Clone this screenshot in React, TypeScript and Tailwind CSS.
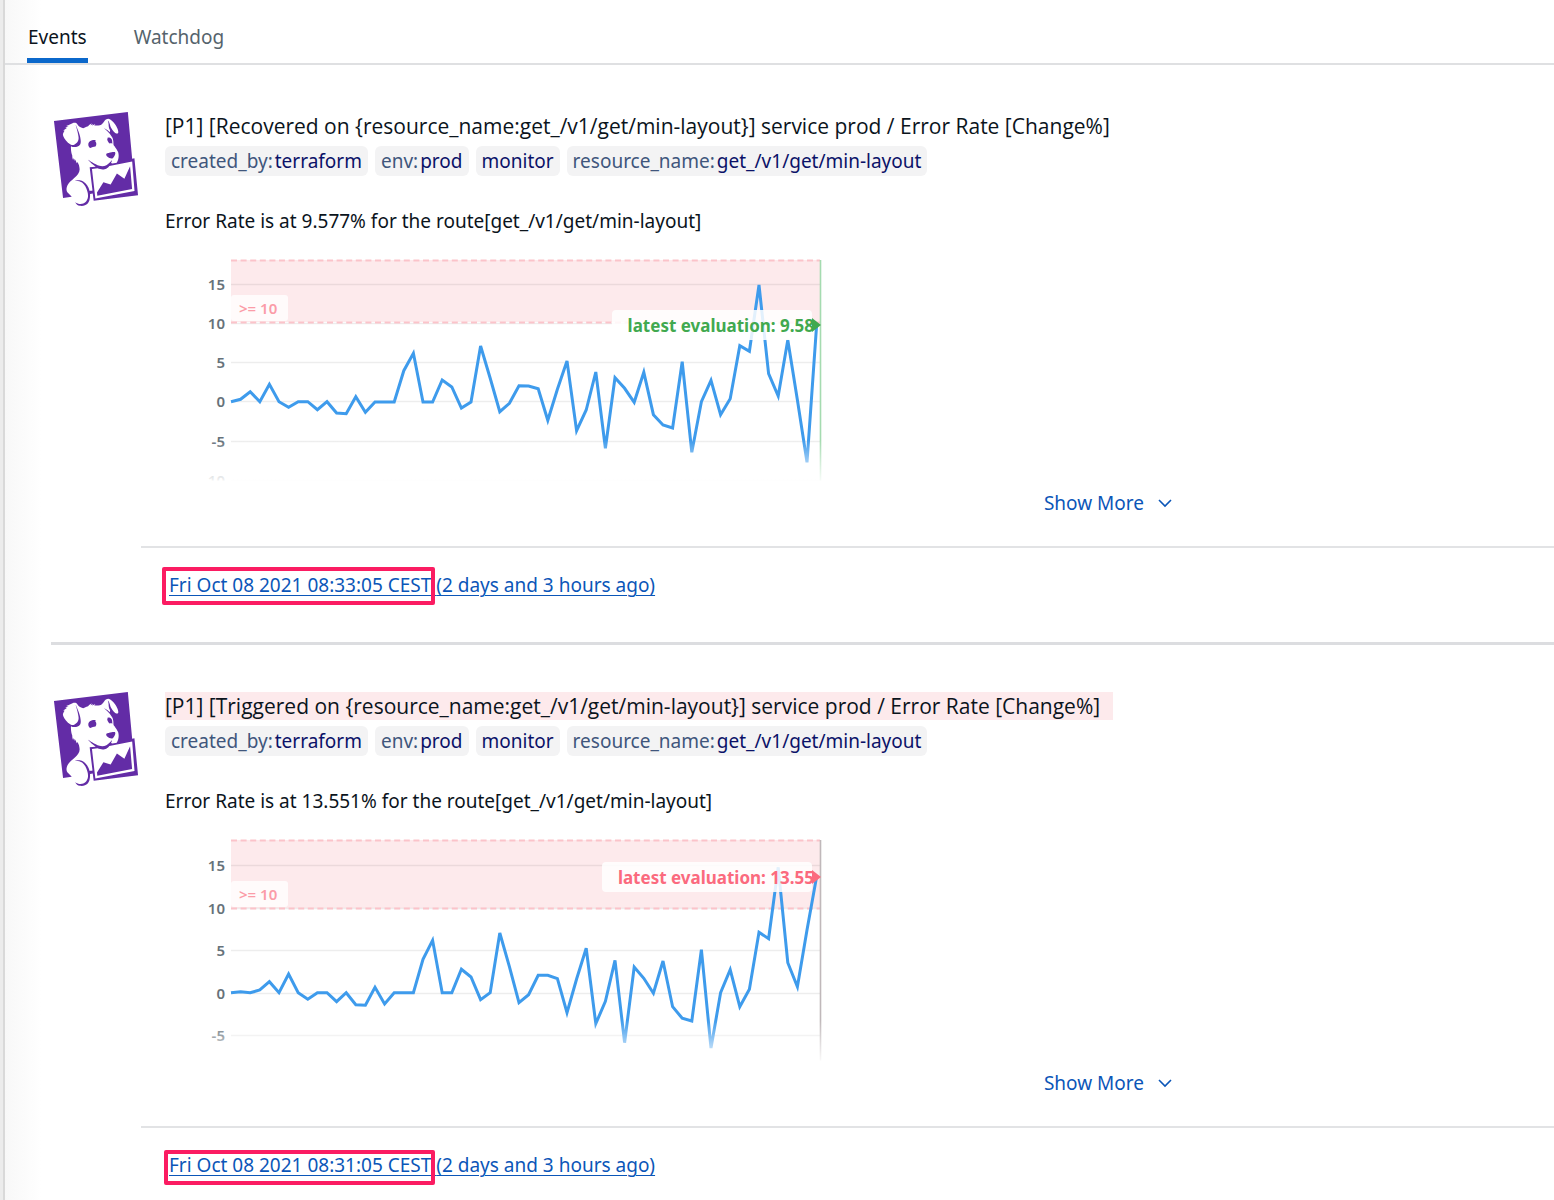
import { SiDatadog } from "react-icons/si";

type Tag = { name?: string; value: string };

type ChartData = {
  ticks: { label: string; y: number }[];
  threshold: number;
  thresholdLabel: string;
  latest: string;
  latestX: number;
  latestY: number;
  accent: string;
  edge: string;
  samples: number[];
};

type EventItem = {
  title: string;
  alert: boolean;
  message: string;
  time: string;
  ago: string;
  frame: string;
  chart: ChartData;
};

const TAGS: Tag[] = [
  { name: "created_by:", value: "terraform" },
  { name: "env:", value: "prod" },
  { value: "monitor" },
  { name: "resource_name:", value: "get_/v1/get/min-layout" },
];

const EVENTS: EventItem[] = [
  {
    title:
      "[P1] [Recovered on {resource_name:get_/v1/get/min-layout}] service prod / Error Rate [Change%]",
    alert: false,
    message: "Error Rate is at 9.577% for the route[get_/v1/get/min-layout]",
    time: "Fri Oct 08 2021 08:33:05 CEST",
    ago: "(2 days and 3 hours ago)",
    frame: "-left-[7px] -right-[4px] -top-[5px] -bottom-[7px]",
    chart: {
      ticks: [
        { label: "15", y: 34 },
        { label: "10", y: 73 },
        { label: "5", y: 112 },
        { label: "0", y: 151 },
        { label: "-5", y: 191 },
        { label: "-10", y: 230 },
      ],
      threshold: 72,
      thresholdLabel: ">= 10",
      latest: "latest evaluation: 9.58",
      latestX: 447,
      latestY: 75,
      accent: "#41a94f",
      edge: "#a5dbb0",
      samples: [
        455, 448, 425, 455, 403, 455, 472, 455, 455, 479, 455, 489, 491, 440, 487, 456, 456, 456,
        362, 310, 456, 456, 390, 411, 474, 456, 288, 385, 485, 460, 407, 408, 416, 511, 418, 333,
        542, 480, 366, 595, 383, 415, 457, 367, 494, 525, 534, 335, 607, 455, 391, 494, 446, 287,
        304, 105, 371, 438, 270, 450, 637, 226,
      ],
    },
  },
  {
    title:
      "[P1] [Triggered on {resource_name:get_/v1/get/min-layout}] service prod / Error Rate [Change%]",
    alert: true,
    message: "Error Rate is at 13.551% for the route[get_/v1/get/min-layout]",
    time: "Fri Oct 08 2021 08:31:05 CEST",
    ago: "(2 days and 3 hours ago)",
    frame: "-left-[5px] -right-[4px] -top-[2px] -bottom-[7px]",
    chart: {
      ticks: [
        { label: "15", y: 35 },
        { label: "10", y: 78 },
        { label: "5", y: 120 },
        { label: "0", y: 163 },
        { label: "-5", y: 205 },
      ],
      threshold: 78,
      thresholdLabel: ">= 10",
      latest: "latest evaluation: 13.55",
      latestX: 437,
      latestY: 47,
      accent: "#fb6a7e",
      edge: "#c0b8ba",
      samples: [
        488, 485, 488, 480, 455, 488, 432, 488, 508, 488, 488, 515, 488, 524, 526, 472, 522, 488,
        488, 488, 388, 331, 488, 488, 418, 441, 509, 488, 309, 410, 518, 494, 436, 436, 446, 548,
        447, 355, 581, 514, 391, 638, 411, 445, 490, 393, 530, 565, 573, 359, 654, 488, 419, 530,
        478, 307, 326, 112, 398, 470, 300, 140,
      ],
    },
  },
];

const PLOT_LEFT = 66;
const PLOT_RIGHT = 655;
const STEP = 9.6;

function Chart({ data }: { data: ChartData }) {
  const points = data.samples
    .map((s, i) => `${(PLOT_LEFT + i * STEP).toFixed(1)},${(s / 3).toFixed(1)}`)
    .join(" ");
  return (
    <div className="relative mt-[15px]">
      <svg
        width="670"
        height="240"
        viewBox="0 0 670 240"
        role="img"
        aria-label={data.latest}
        className="block max-w-full font-['Noto_Sans',sans-serif]"
      >
        <rect x={PLOT_LEFT} y="10" width={PLOT_RIGHT - PLOT_LEFT} height={data.threshold - 10} fill="#fdeaec" />
        {data.ticks.map((t) => (
          <g key={t.label}>
            <line x1={PLOT_LEFT} x2={PLOT_RIGHT} y1={t.y + 0.5} y2={t.y + 0.5} stroke="#000" strokeOpacity="0.07" strokeWidth="1.5" />
            <text x="60" y={t.y + 6} textAnchor="end" fontSize="15" fontWeight="600" fill="#66727a">
              {t.label}
            </text>
          </g>
        ))}
        {[10.5, data.threshold + 0.5].map((y) => (
          <line key={y} x1={PLOT_LEFT} x2={PLOT_RIGHT} y1={y} y2={y} stroke="#fbc3ca" strokeWidth="1.8" strokeDasharray="6 3.6" />
        ))}
        <line x1={PLOT_RIGHT + 0.5} x2={PLOT_RIGHT + 0.5} y1="10" y2="240" stroke={data.edge} strokeWidth="1.6" />
        <polyline points={points} fill="none" stroke="#3e9bec" strokeWidth="3" strokeLinejoin="miter" />
        <rect x={PLOT_LEFT} y={data.threshold - 27} width="57" height="26" rx="3" fill="#fff" fillOpacity="0.8" />
        <text x="74" y={data.threshold - 8} fontSize="15" fontWeight="600" fill="#fb9ca8">
          {data.thresholdLabel}
        </text>
        <rect x={data.latestX} y={data.latestY - 15} width={647 - data.latestX} height="30" rx="4" fill="#fff" fillOpacity="0.85" />
        <text x="649" y={data.latestY + 7} textAnchor="end" fontSize="17" fontWeight="700" fill={data.accent}>
          {data.latest}
        </text>
        <path d={`M647 ${data.latestY - 7}l9 7l-9 7z`} fill={data.accent} />
      </svg>
      <div className="absolute inset-x-0 bottom-0 h-[50px] bg-[linear-gradient(to_bottom,rgba(255,255,255,0)_0px,rgba(255,255,255,0.9)_40px,#ffffff_41px)]" />
    </div>
  );
}

function EventCard({ event }: { event: EventItem }) {
  return (
    <article className="ml-[46px] border-b-3 border-[#dcdde0]">
      <div className="flex items-start pt-[47px]">
        <SiDatadog
          preserveAspectRatio="none"
          className="h-[94px] w-[90px] shrink-0 fill-[#632ca6]"
          aria-label="Datadog"
        />
        <div className="ml-6 max-w-[1008px] min-w-0 flex-1">
          <h2 className="font-['Open_Sans','Noto_Sans',sans-serif] text-[21px] leading-7 text-[#0b141c]">
            <span className={event.alert ? "inline-block bg-[#fdeaec] pr-[13px]" : "inline-block"}>{event.title}</span>
          </h2>
          <ul className="mt-[6px] flex flex-wrap gap-[7px]">
            {TAGS.map((tag) => (
              <li key={tag.value} className="rounded-md bg-[#f3f3f4] px-[6px] text-[19px] leading-[30px] text-[#0b1268]">
                {tag.name && <span className="mr-[2px] text-[#40567c]">{tag.name}</span>}
                {tag.value}
              </li>
            ))}
          </ul>
          <p className="mt-[31px] text-[19px] leading-7 text-[#0b141c]">{event.message}</p>
          <Chart data={event.chart} />
          <div className="-mt-px flex justify-end">
            <button type="button" className="relative flex cursor-pointer items-center gap-[13px] text-[19px] leading-7 text-[#0b56b8]">
              Show More
              <svg width="16" height="12" viewBox="0 0 16 12" fill="none" stroke="currentColor" strokeWidth="1.6" aria-hidden="true">
                <path d="M2 3l6 6l6-6" />
              </svg>
            </button>
          </div>
        </div>
      </div>
      <footer className="mt-[29px] ml-[90px] border-t-2 border-[#e2e3e5] pt-[23px] pb-[43px] pl-7 text-[19px] leading-7 text-[#0b56b8]">
        <a href="#event" className="underline decoration-[1px] underline-offset-3">
          <span className="relative">
            {event.time}
            <span className={`pointer-events-none absolute rounded-xs border-4 border-[#fb1c62] ${event.frame}`} />
          </span>{" "}
          {event.ago}
        </a>
      </footer>
    </article>
  );
}

export default function App() {
  return (
    <div className="flex h-screen overflow-hidden bg-white font-['Noto_Sans',sans-serif]">
      <div className="w-[5px] shrink-0 border-r-2 border-[#d9d9d9] bg-[#ececec]" />
      <div className="min-w-0 flex-1 bg-[linear-gradient(to_right,#f8f8f8,#ffffff_36px)]">
        <nav className="flex h-[65px] items-end gap-[46px] border-b-2 border-[#dfe0e2] pl-[22px]">
          <button type="button" className="cursor-pointer border-b-5 border-[#0b68cb] px-[1px] pb-[7px] text-[19px] leading-7 text-[#0b141c]">
            Events
          </button>
          <button type="button" className="cursor-pointer border-b-5 border-transparent pb-[7px] text-[19px] leading-7 text-[#55636c]">
            Watchdog
          </button>
        </nav>
        <main>
          {EVENTS.map((e) => (
            <EventCard key={e.time} event={e} />
          ))}
        </main>
      </div>
    </div>
  );
}
